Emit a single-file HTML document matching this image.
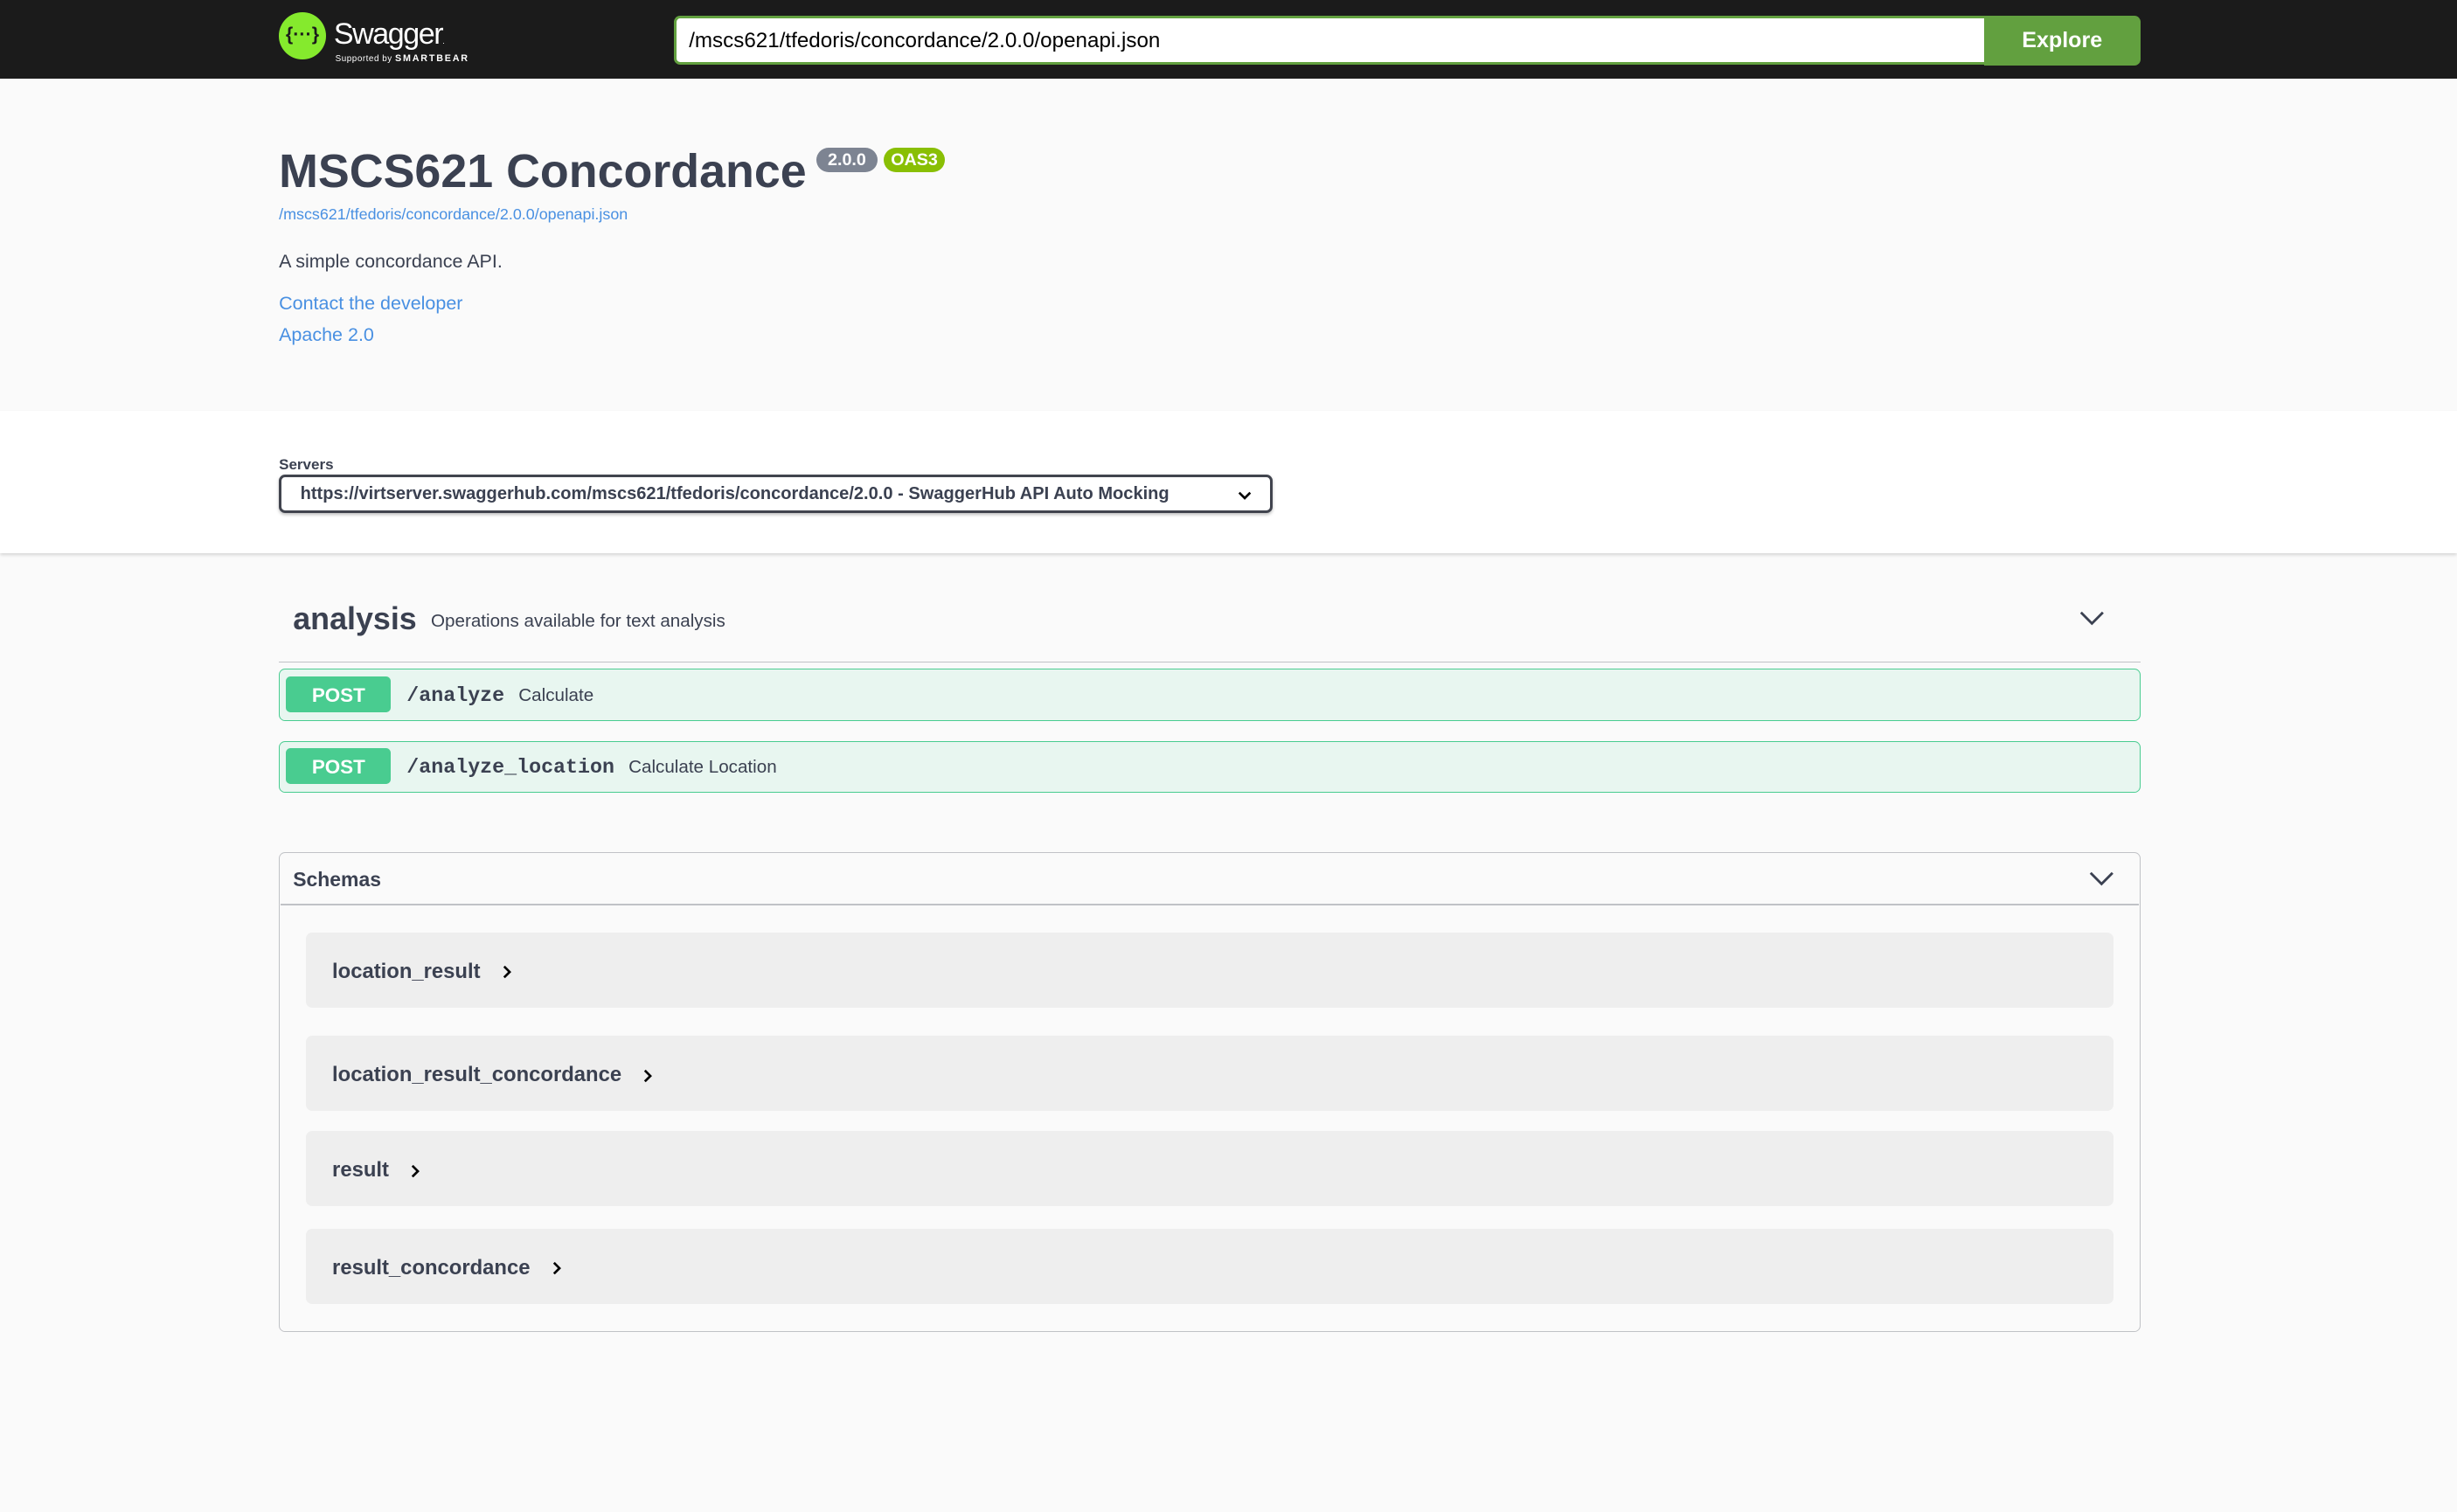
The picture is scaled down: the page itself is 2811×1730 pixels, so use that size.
<!DOCTYPE html>
<html><head><meta charset="utf-8"><style>
html{zoom:1.79273}
body{margin:0;width:1568px;height:965px;background:#fafafa;font-family:"Liberation Sans",Arial,sans-serif;color:#3b4151;position:relative;overflow:hidden}
.abs{position:absolute}
.top{left:0;top:0;width:1568px;height:50px;background:#1b1b1b}
.logo{left:178px;top:8px;width:30px;height:30px;border-radius:50%;background:#85ea2d;color:#1b1b1b;font-size:12px;font-weight:bold;text-align:center;line-height:29px}
.sw{left:213px;top:11px;color:#fff;font-size:19px;letter-spacing:-0.8px}
.sb{left:214px;top:34px;color:#fff;font-size:5.5px;letter-spacing:.3px}
.inp{left:430px;top:10px;height:28px;border:2px solid #62a03f;border-right:none;background:#fff;border-radius:4px 0 0 4px;font-size:13.5px;line-height:29px;padding-left:8px;box-sizing:content-box;width:828px;color:#000}
.exp{left:1266px;top:10px;width:100px;height:32px;background:#62a03f;color:#fff;font-weight:bold;font-size:14px;line-height:32px;text-align:center;border-radius:0 4px 4px 0}
h1{margin:0;left:178px;top:92px;font-size:30px;font-weight:bold;white-space:nowrap}
.bd{top:94px;height:16px;border-radius:8px;color:#fff;font-size:11px;font-weight:bold;line-height:16px;text-align:center}
.lnk{color:#4990e2}
.servers{left:0;top:262px;width:1568px;height:91px;background:#fff;box-shadow:0 1px 2px rgba(0,0,0,.15)}
.sel{left:178px;top:303px;height:21px;border:2px solid #41444e;border-radius:4px;font-size:11.2px;font-weight:bold;line-height:22px;padding-left:12px;box-sizing:content-box;width:619px;box-shadow:0 1px 2px rgba(0,0,0,.25)}
.op{left:178px;width:1187px;height:32px;background:#e8f6f0;border:1px solid #49cc90;border-radius:4px}
.post{position:absolute;left:4px;top:4px;width:67px;height:23px;background:#49cc90;border-radius:3px;color:#fff;font-weight:bold;font-size:12.5px;line-height:24px;text-align:center}
.path{position:absolute;left:81px;top:9px;font-family:"Liberation Mono",monospace;font-weight:bold;font-size:13px;white-space:nowrap}
.path span{font-family:"Liberation Sans",sans-serif;font-weight:normal;font-size:11.5px;margin-left:9px}
.sch{left:178px;top:544px;width:1187px;height:305px;border:1px solid rgba(59,65,81,.3);border-radius:4px}
.item{left:195px;width:1154px;height:48px;background:#eee;border-radius:4px;font-size:13.3px;font-weight:bold;line-height:50px;box-sizing:border-box;padding-left:17px;color:#3b4151}
.item svg{margin-left:14px;vertical-align:-1px}
</style></head><body>
<div class="abs top"></div>
<div class="abs logo">{···}</div>
<div class="abs sw">Swagger<span style="font-size:5px">.</span></div>
<div class="abs sb">Supported by <b style="font-size:6px;letter-spacing:1px">SMARTBEAR</b></div>
<div class="abs inp">/mscs621/tfedoris/concordance/2.0.0/openapi.json</div>
<div class="abs exp">Explore</div>

<h1 class="abs">MSCS621 Concordance</h1>
<div class="abs bd" style="left:521px;width:39px;background:#7d8492">2.0.0</div>
<div class="abs bd" style="left:564px;width:39px;background:#89bf04">OAS3</div>
<div class="abs lnk" style="left:178px;top:131px;font-size:10px">/mscs621/tfedoris/concordance/2.0.0/openapi.json</div>
<div class="abs" style="left:178px;top:160px;font-size:12px">A simple concordance API.</div>
<div class="abs lnk" style="left:178px;top:187px;font-size:12px">Contact the developer</div>
<div class="abs lnk" style="left:178px;top:207px;font-size:12px">Apache 2.0</div>

<div class="abs servers"></div>
<div class="abs" style="left:178px;top:291px;font-size:9.5px;font-weight:bold">Servers</div>
<div class="abs sel">https://virtserver.swaggerhub.com/mscs621/tfedoris/concordance/2.0.0 - SwaggerHub API Auto Mocking
<svg style="position:absolute;right:12px;top:8px" width="9" height="7" viewBox="0 0 9 7"><path d="M1 1.5L4.5 5L8 1.5" stroke="#000" stroke-width="1.5" fill="none"/></svg></div>

<div class="abs" style="left:187px;top:384px;font-size:20px;font-weight:bold;">analysis</div>
<div class="abs" style="left:275px;top:390px;font-size:11.5px">Operations available for text analysis</div>
<svg class="abs" style="left:1327px;top:390px" width="16" height="10" viewBox="0 0 16 10"><path d="M1 1L8 8L15 1" stroke="#3b4151" stroke-width="1.6" fill="none"/></svg>
<div class="abs" style="left:178px;top:422px;width:1188px;height:1px;background:rgba(59,65,81,.3)"></div>

<div class="abs op" style="top:427px"><div class="post">POST</div><div class="path">/analyze<span>Calculate</span></div></div>
<div class="abs op" style="top:473px"><div class="post">POST</div><div class="path">/analyze_location<span>Calculate Location</span></div></div>

<div class="abs sch"></div>
<div class="abs" style="left:187px;top:554px;font-size:12.8px;font-weight:bold">Schemas</div>
<div class="abs" style="left:179px;top:577px;width:1186px;height:1px;background:rgba(59,65,81,.3)"></div>
<svg class="abs" style="left:1333px;top:556px" width="16" height="10" viewBox="0 0 16 10"><path d="M1 1L8 8L15 1" stroke="#3b4151" stroke-width="1.6" fill="none"/></svg>
<div class="abs item" style="top:595px">location_result<svg width="6" height="9" viewBox="0 0 6 9"><path d="M1 1L4.5 4.5L1 8" stroke="#000" stroke-width="1.5" fill="none"/></svg></div>
<div class="abs item" style="top:661px">location_result_concordance<svg width="6" height="9" viewBox="0 0 6 9"><path d="M1 1L4.5 4.5L1 8" stroke="#000" stroke-width="1.5" fill="none"/></svg></div>
<div class="abs item" style="top:722px">result<svg width="6" height="9" viewBox="0 0 6 9"><path d="M1 1L4.5 4.5L1 8" stroke="#000" stroke-width="1.5" fill="none"/></svg></div>
<div class="abs item" style="top:784px">result_concordance<svg width="6" height="9" viewBox="0 0 6 9"><path d="M1 1L4.5 4.5L1 8" stroke="#000" stroke-width="1.5" fill="none"/></svg></div>
</body></html>
